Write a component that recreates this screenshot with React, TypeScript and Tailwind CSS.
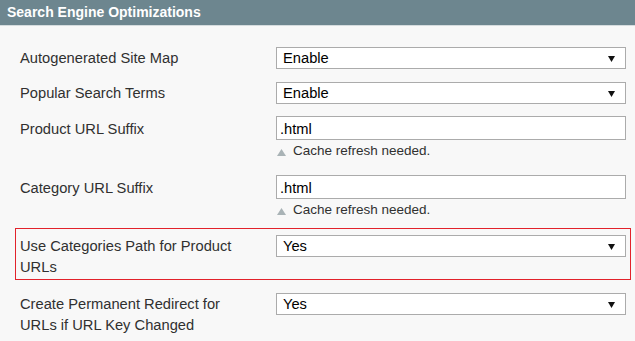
const font = { fontFamily: '"Liberation Sans", Arial, sans-serif' };

const Arrow = () => (
  <svg width="7" height="6" viewBox="0 0 7 6" className="absolute right-[10px] top-[8px]">
    <polygon points="0,0 7,0 3.5,6" fill="#111" />
  </svg>
);

const SelectBox = ({ value }: { value: string }) => (
  <div className="relative h-[22px] w-[350px] shrink-0 border border-[#ababab] bg-white pl-[6px] leading-[20px] text-[14.7px] text-black">
    {value}
    <Arrow />
  </div>
);

const Note = () => (
  <div className="mt-[2px] flex items-center leading-[18px] text-[13.5px] text-[#303030]">
    <svg width="9" height="7" viewBox="0 0 9 7" className="mr-[7px] ml-[1px] mt-[2px]">
      <polygon points="4.5,0 9,7 0,7" fill="#a9b3b6" />
    </svg>
    Cache refresh needed.
  </div>
);

const TextBox = ({ value }: { value: string }) => (
  <div className="h-[24px] w-[350px] border border-[#ababab] bg-white pl-[3px] pt-[2px] leading-[20px] text-[14.7px] text-black">
    {value}
  </div>
);

const Label = ({ children }: { children: string }) => (
  <div className="mr-[28px] w-[228px] shrink-0 leading-[21px] text-[14.7px] text-[#303030]">{children}</div>
);

export default function App() {
  return (
    <div className="h-[341px] w-[635px] overflow-hidden bg-[#f8f8f8]" style={font}>
      <div className="h-[26px] border-b border-[#d5dcde] bg-[#6d868f] pl-[7px] leading-[25px] text-[14px] font-bold text-white">
        Search Engine Optimizations
      </div>

      <div className="pl-[15px] pt-[21px]">
        <div className="flex items-baseline px-[5px]">
          <Label>Autogenerated Site Map</Label>
          <SelectBox value="Enable" />
        </div>

        <div className="mt-[13px] flex items-baseline px-[5px]">
          <Label>Popular Search Terms</Label>
          <SelectBox value="Enable" />
        </div>

        <div className="mt-[12px] flex items-baseline px-[5px]">
          <Label>Product URL Suffix</Label>
          <div className="flex flex-col">
            <TextBox value=".html" />
            <Note />
          </div>
        </div>

        <div className="mt-[15px] flex items-baseline px-[5px]">
          <Label>Category URL Suffix</Label>
          <div className="flex flex-col">
            <TextBox value=".html" />
            <Note />
          </div>
        </div>

        <div className="mt-[9px] flex w-[616px] items-baseline border border-[#e2222b] px-[4px] pt-[6px] pb-[1px]">
          <Label>Use Categories Path for Product URLs</Label>
          <SelectBox value="Yes" />
        </div>

        <div className="mt-[13px] flex items-baseline px-[5px]">
          <Label>Create Permanent Redirect for URLs if URL Key Changed</Label>
          <SelectBox value="Yes" />
        </div>
      </div>
    </div>
  );
}
